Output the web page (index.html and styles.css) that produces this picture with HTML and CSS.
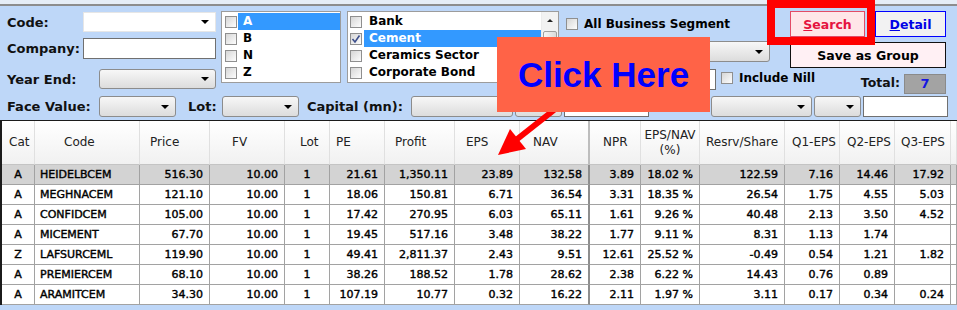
FILE: index.html
```html
<!DOCTYPE html>
<html lang='en'>
<head>
    <meta charset='UTF-8'>
    <meta name='viewport' content='width=device-width, initial-scale=1.0'>
    <title>Sector Search</title>

    <link rel="stylesheet" href="styles.css">
</head>
<body>
    <div class='topline'></div>
    <div class='form'>
        <div class='top'>
            <div class='fields'>
                <div class='row r-code'>
                    <span class='lbl'>Code:</span>
                    <div class='combo white w133'><span class='arrow'></span></div>
                </div>
                <div class='row r-company'>
                    <span class='lbl'>Company:</span>
                    <div class='textbox w133'></div>
                </div>
                <div class='row r-year'>
                    <span class='lbl'>Year End:</span>
                    <div class='combo w117'><span class='arrow'></span></div>
                </div>
            </div>

            <div class='listbox catlist'>
                <div class='item sel'><span class='chk'></span><span class='txt'>A</span></div>
                <div class='item'><span class='chk'></span><span class='txt'>B</span></div>
                <div class='item'><span class='chk'></span><span class='txt'>N</span></div>
                <div class='item'><span class='chk'></span><span class='txt'>Z</span></div>
            </div>

            <div class='listbox seclist'>
                <div class='items'>
                    <div class='item'><span class='chk'></span><span class='txt'>Bank</span></div>
                    <div class='item sel'><span class='chk on'><svg width='10' height='10' viewBox='0 0 10 10'><path d='M1.5 5 L4 8 L8.5 1.5' fill='none' stroke='#3d4f8c' stroke-width='1.6'/></svg></span><span class='txt'>Cement</span></div>
                    <div class='item'><span class='chk'></span><span class='txt'>Ceramics Sector</span></div>
                    <div class='item'><span class='chk'></span><span class='txt'>Corporate Bond</span></div>
                </div>
                <div class='scrollbar'>
                    <div class='sb-up'><span class='up'></span></div>
                    <div class='sb-thumb'></div>
                </div>
            </div>

            <div class='side'>
                <div class='srow s1'>
                    <span class='chk'></span><span class='blabel'>All Business Segment</span>
                    <button class='btn search'><u>S</u>earch</button>
                    <button class='btn detail'><u>D</u>etail</button>
                </div>
                <div class='srow s2'>
                    <div class='combo group-combo'><span class='arrow'></span></div>
                    <button class='btn save'>Save as Group</button>
                </div>
                <div class='srow s3'>
                    <div class='textbox nill-box'></div>
                    <span class='chk nill-chk'></span><span class='blabel nill'>Include Nill</span>
                    <span class='lbl total'>Total:</span>
                    <div class='count'>7</div>
                </div>
            </div>
        </div>

        <div class='bottom'>
            <span class='lbl l-face'>Face Value:</span>
            <div class='combo w77'><span class='arrow'></span></div>
            <span class='lbl l-lot'>Lot:</span>
            <div class='combo w77'><span class='arrow'></span></div>
            <span class='lbl l-cap'>Capital (mn):</span>
            <div class='combo w102'><span class='arrow'></span></div>
            <div class='combo w47 ml2'><span class='arrow'></span></div>
            <div class='textbox w85 ml2'></div>
            <div class='combo w101 ml62'><span class='arrow'></span></div>
            <div class='combo w47 ml2'><span class='arrow'></span></div>
            <div class='textbox w85 ml2'></div>
        </div>
    </div>

    <div class='grid'>
        <table>
            <colgroup>
                <col style='width:33px'><col style='width:105px'><col style='width:70px'><col style='width:75px'>
                <col style='width:45px'><col style='width:55px'><col style='width:70px'><col style='width:65px'>
                <col style='width:70px'><col style='width:51px'><col style='width:59px'><col style='width:85px'>
                <col style='width:55px'><col style='width:55px'><col style='width:56px'><col>
            </colgroup>
            <thead>
                <tr>
                    <th>Cat</th><th>Code</th><th>Price</th><th>FV</th><th>Lot</th><th>PE</th><th>Profit</th>
                    <th>EPS</th><th class='nav'>NAV</th><th>NPR</th><th class='mid'>EPS/NAV<br>(%)</th>
                    <th>Resrv/Share</th><th>Q1-EPS</th><th>Q2-EPS</th><th>Q3-EPS</th><th></th>
                </tr>
            </thead>
            <tbody>
                <tr class='picked'>
                    <td class='c'>A</td><td class='l'>HEIDELBCEM</td><td>516.30</td><td>10.00</td><td class='c'>1</td><td>21.61</td><td>1,350.11</td>
                    <td>23.89</td><td class='nav'>132.58</td><td>3.89</td><td>18.02 %</td><td>122.59</td><td>7.16</td><td>14.46</td><td>17.92</td><td></td>
                </tr>
                <tr>
                    <td class='c'>A</td><td class='l'>MEGHNACEM</td><td>121.10</td><td>10.00</td><td class='c'>1</td><td>18.06</td><td>150.81</td>
                    <td>6.71</td><td class='nav'>36.54</td><td>3.31</td><td>18.35 %</td><td>26.54</td><td>1.75</td><td>4.55</td><td>5.03</td><td></td>
                </tr>
                <tr>
                    <td class='c'>A</td><td class='l'>CONFIDCEM</td><td>105.00</td><td>10.00</td><td class='c'>1</td><td>17.42</td><td>270.95</td>
                    <td>6.03</td><td class='nav'>65.11</td><td>1.61</td><td>9.26 %</td><td>40.48</td><td>2.13</td><td>3.50</td><td>4.52</td><td></td>
                </tr>
                <tr>
                    <td class='c'>A</td><td class='l'>MICEMENT</td><td>67.70</td><td>10.00</td><td class='c'>1</td><td>19.45</td><td>517.16</td>
                    <td>3.48</td><td class='nav'>38.22</td><td>1.77</td><td>9.11 %</td><td>8.31</td><td>1.13</td><td>1.74</td><td></td><td></td>
                </tr>
                <tr>
                    <td class='c'>Z</td><td class='l'>LAFSURCEML</td><td>119.90</td><td>10.00</td><td class='c'>1</td><td>49.41</td><td>2,811.37</td>
                    <td>2.43</td><td class='nav'>9.51</td><td>12.61</td><td>25.52 %</td><td>-0.49</td><td>0.54</td><td>1.21</td><td>1.82</td><td></td>
                </tr>
                <tr>
                    <td class='c'>A</td><td class='l'>PREMIERCEM</td><td>68.10</td><td>10.00</td><td class='c'>1</td><td>38.26</td><td>188.52</td>
                    <td>1.78</td><td class='nav'>28.62</td><td>2.38</td><td>6.22 %</td><td>14.43</td><td>0.76</td><td>0.89</td><td></td><td></td>
                </tr>
                <tr>
                    <td class='c'>A</td><td class='l'>ARAMITCEM</td><td>34.30</td><td>10.00</td><td class='c'>1</td><td>107.19</td><td>10.77</td>
                    <td>0.32</td><td class='nav'>16.22</td><td>2.11</td><td>1.97 %</td><td>3.11</td><td>0.17</td><td>0.34</td><td>0.24</td><td></td>
                </tr>
            </tbody>
        </table>
    </div>

    <!-- annotation overlays -->
    <svg class='pointer' width='90' height='60' viewBox='0 0 90 60'>
        <line x1='74' y1='6' x2='36' y2='36' stroke='#ff0000' stroke-width='6'/>
        <polygon points='18,51 30,25 46,45' fill='#ff0000'/>
    </svg>
    <div class='callout'>Click Here</div>
    <div class='focus'></div>
</body>
</html>
```

FILE: styles.css
```css
*{
    margin: 0;
    padding: 0;
    box-sizing: border-box;
}
body{
    position: relative;
    width: 957px;
    height: 310px;
    overflow: hidden;
    background-color: #bed7f8;
    font-family: "DejaVu Sans", Verdana, sans-serif;
    color: #000;
}
.topline{
    height: 6px;
    background-color: #e6edf6;
    border-bottom: 2px solid #8d8d8d;
}
.form{
    padding: 5px 0 0 7px;
}
.top{
    display: flex;
    height: 85px;
}
.lbl{
    font-size: 13px;
    font-weight: bold;
    white-space: nowrap;
    color: #111;
}

/* left field column */
.fields{
    width: 209px;
    display: flex;
    flex-direction: column;
}
.row{
    display: flex;
    align-items: center;
    justify-content: space-between;
}
.r-code{
    margin-top: 1px;
    height: 20px;
}
.r-company{
    margin-top: 6px;
    height: 21px;
}
.r-year{
    margin-top: 10px;
    height: 20px;
}

.combo{
    height: 21px;
    flex: none;
    display: flex;
    align-items: center;
    justify-content: flex-end;
    padding-right: 6px;
    border: 1px solid #8c8c8c;
    border-radius: 3px;
    background: linear-gradient(#f7f7f7, #dcdcdc);
}
.combo.white{
    height: 20px;
    background: #fff;
    border-color: #e6e6e6;
    border-radius: 0;
}
.arrow{
    width: 0;
    height: 0;
    border-left: 4px solid transparent;
    border-right: 4px solid transparent;
    border-top: 4px solid #000;
}
.textbox{
    height: 21px;
    flex: none;
    background: #fff;
    border: 1px solid #707070;
}
.w133{ width: 133px; }
.w117{ width: 117px; height: 20px; }
.w77{ width: 77px; }
.w102{ width: 102px; }
.w101{ width: 101px; }
.w47{ width: 47px; }
.w85{ width: 85px; }
.ml2{ margin-left: 2px; }
.ml62{ margin-left: 62px; }

/* list boxes */
.listbox{
    height: 72px;
    padding-top: 1px;
    background: #fff;
    border: 1px solid #9c9c9c;
}
.catlist{
    margin-left: 5px;
    width: 120px;
}
.seclist{
    margin-left: 6px;
    width: 212px;
    display: flex;
}
.items{
    flex: 1;
}
.item{
    display: flex;
    align-items: center;
    height: 17px;
    font-size: 12px;
    font-weight: bold;
}
.item .chk{
    margin: 0 1px 0 3px;
}
.seclist .item .chk{
    margin: 0 2px 0 2px;
}
.item .txt{
    flex: 1;
    height: 17px;
    line-height: 17px;
    padding-left: 5px;
}
.item.sel .txt{
    background: #3399ff;
    color: #fff;
}
.chk{
    width: 12px;
    height: 12px;
    flex: none;
    display: flex;
    align-items: center;
    justify-content: center;
    border: 1px solid #8f8f8f;
    background: linear-gradient(135deg, #d6d6d6, #fdfdfd);
}
.scrollbar{
    width: 17px;
    background: #f2f2f2;
    border-left: 1px solid #ececec;
    margin-top: -1px;
}
.sb-up{
    height: 17px;
    display: flex;
    align-items: center;
    justify-content: center;
}
.up{
    width: 0;
    height: 0;
    border-left: 3px solid transparent;
    border-right: 3px solid transparent;
    border-bottom: 3px solid #222;
}
.sb-thumb{
    height: 16px;
    margin: 2px 1px;
    border: 1px solid #9e9e9e;
    border-radius: 2px;
    background: linear-gradient(90deg, #f6f6f6, #dadada);
}

/* right side */
.side{
    margin-left: 7px;
    width: 380px;
    display: flex;
    flex-direction: column;
}
.srow{
    display: flex;
}
.s1{
    height: 26px;
    align-items: center;
}
.s2{
    margin-top: 4px;
    height: 27px;
    align-items: flex-start;
}
.s3{
    height: 26px;
    align-items: flex-start;
}
.blabel{
    margin-left: 6px;
    font-size: 12px;
    font-weight: bold;
    white-space: nowrap;
}
.btn{
    height: 26px;
    flex: none;
    font-family: inherit;
    font-size: 12.5px;
    font-weight: bold;
}
.search{
    margin-left: auto;
    width: 75px;
    background: #ffe6e8;
    border: 1px solid #e34b66;
    color: #e5133f;
}
.detail{
    margin-left: 10px;
    width: 71px;
    background: #f2f2f2;
    border: 1px solid #0000ff;
    color: #0000e6;
}
.save{
    margin-left: auto;
    margin-top: 1px;
    width: 156px;
    background: #fff0f4;
    border: 1px solid #111;
    color: #000;
}
.group-combo{
    margin-left: 32px;
    width: 172px;
}
.nill-box{
    margin-top: 1px;
    margin-left: 84px;
    width: 66px;
}
.nill-chk{
    margin-top: 4px;
    margin-left: 5px;
}
.nill{
    margin-top: 3px;
    line-height: 14px;
}
.total{
    margin-left: auto;
    margin-top: 8px;
    margin-right: 4px;
    line-height: 14px;
    font-size: 12.5px;
}
.count{
    margin-top: 6px;
    width: 42px;
    height: 20px;
    line-height: 18px;
    text-align: center;
    background: #a3a3a3;
    border: 1px solid #8a8a8a;
    color: #1515e0;
    font-size: 13px;
    font-weight: bold;
}

/* bottom filter row */
.bottom{
    display: flex;
    align-items: center;
    height: 21px;
}
.l-face{ width: 92px; }
.l-lot{ width: 34px; margin-left: 12px; }
.l-cap{ width: 104px; margin-left: 8px; }

/* result grid */
.grid{
    margin-top: 3px;
    background: #fff;
    border-top: 1px solid #1b1b1b;
    border-left: 2px solid #1b1b1b;
}
table{
    width: 955px;
    table-layout: fixed;
    border-collapse: separate;
    border-spacing: 0;
}
th{
    height: 44px;
    padding: 0;
    text-align: left;
    vertical-align: middle;
    font-size: 12px;
    font-weight: normal;
    line-height: 15px;
    color: #222;
    background: linear-gradient(#ffffff, #f1f1f1);
    border-right: 1px solid #e0e0e0;
    border-bottom: 1px solid #c4c4c4;
    white-space: nowrap;
}
th:nth-child(1){ padding-left: 7px; }
th:nth-child(2){ padding-left: 29px; }
th:nth-child(3){ padding-left: 10px; }
th:nth-child(4){ padding-left: 22px; }
th:nth-child(5){ padding-left: 15px; }
th:nth-child(6){ padding-left: 6px; }
th:nth-child(7){ padding-left: 10px; }
th:nth-child(8){ padding-left: 11px; }
th:nth-child(9){ padding-left: 13px; }
th:nth-child(10){ padding-left: 13px; }
th:nth-child(12){ padding-left: 6px; }
th:nth-child(13),
th:nth-child(14){ padding-left: 7px; }
th:nth-child(15){ padding-left: 6px; }
th.mid{
    text-align: center;
}
th.nav{
    border-right: 2px solid #bdbdbd;
}
td{
    height: 20px;
    padding: 0 6px 0 0;
    text-align: right;
    font-size: 11px;
    line-height: 19px;
    color: #000;
    -webkit-text-stroke: 0.4px #000;
    border-right: 1px solid #a2a2a2;
    border-bottom: 1px solid #a2a2a2;
    white-space: nowrap;
}
td.c{
    padding: 0;
    text-align: center;
}
td.l{
    padding: 0 0 0 5px;
    text-align: left;
}
td.nav{
    border-right: 2px solid #8e8e8e;
}
tr.picked td{
    background: #d3d3d3;
}

/* annotation overlays */
.callout{
    position: absolute;
    left: 497px;
    top: 37px;
    width: 213px;
    height: 75px;
    z-index: 3;
    display: flex;
    align-items: center;
    justify-content: center;
    background: #ff6347;
    color: #0000ff;
    font-family: "Liberation Sans", Arial, sans-serif;
    font-size: 35px;
    font-weight: bold;
}
.pointer{
    position: absolute;
    left: 480px;
    top: 104px;
    z-index: 2;
}
.focus{
    position: absolute;
    left: 767px;
    top: 0;
    width: 108px;
    height: 45px;
    z-index: 3;
    border: 8px solid #ff0000;
}
```
